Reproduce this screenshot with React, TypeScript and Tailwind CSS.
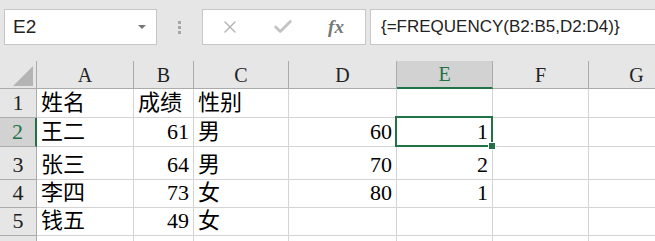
import { X, Check } from 'lucide-react';

const cols = [
  { key: 'A', w: 'w-[97px]' },
  { key: 'B', w: 'w-[60px]' },
  { key: 'C', w: 'w-[95px]' },
  { key: 'D', w: 'w-[108px]' },
  { key: 'E', w: 'w-[96px]' },
  { key: 'F', w: 'w-[96px]' },
  { key: 'G', w: 'w-[96px]' },
];

type Cell = { v: string; num?: boolean };

const rows: { n: number; h: string; cells: (Cell | null)[] }[] = [
  { n: 1, h: 'h-[29px]', cells: [{ v: '姓名' }, { v: '成绩' }, { v: '性别' }, null, null, null, null] },
  { n: 2, h: 'h-[29px]', cells: [{ v: '王二' }, { v: '61', num: true }, { v: '男' }, { v: '60', num: true }, { v: '1', num: true }, null, null] },
  { n: 3, h: 'h-[33px]', cells: [{ v: '张三' }, { v: '64', num: true }, { v: '男' }, { v: '70', num: true }, { v: '2', num: true }, null, null] },
  { n: 4, h: 'h-[28px]', cells: [{ v: '李四' }, { v: '73', num: true }, { v: '女' }, { v: '80', num: true }, { v: '1', num: true }, null, null] },
  { n: 5, h: 'h-[28px]', cells: [{ v: '钱五' }, { v: '49', num: true }, { v: '女' }, null, null, null, null] },
  // row 6 only peeks in at the bottom edge, its number stays out of view
  { n: 6, h: 'h-[28px]', cells: [null, null, null, null, null, null, null] },
];

const cellFont = { fontFamily: '"Liberation Serif", "Noto Sans CJK SC", serif' };

function Toolbar() {
  return (
    <div className="h-[61px] bg-[#e6e6e6] flex items-start pt-[9px] pl-[4px]">
      <div className="w-[153px] h-[36px] bg-white border border-[#c6c6c6] flex items-center justify-between pl-[8px] pr-[10px]">
        <span className="text-[19px] text-[#222]" style={{ fontFamily: '"Liberation Sans", sans-serif' }}>E2</span>
        <span className="w-0 h-0 border-l-[4px] border-r-[4px] border-t-[4px] border-l-transparent border-r-transparent border-t-[#777]" />
      </div>
      <div className="w-[45px] h-[36px] flex flex-col items-center justify-center gap-[2px]">
        <span className="w-[3px] h-[3px] bg-[#a6a6a6]" />
        <span className="w-[3px] h-[3px] bg-[#a6a6a6]" />
        <span className="w-[3px] h-[3px] bg-[#a6a6a6]" />
      </div>
      <div className="w-[164px] h-[36px] bg-white border border-[#c6c6c6] flex items-center">
        <div className="w-[54px] flex justify-center">
          <X size={20} strokeWidth={1.6} color="#b3b3b3" />
        </div>
        <div className="w-[52px] flex justify-center">
          <Check size={22} strokeWidth={3} color="#c3c3c3" />
        </div>
        <div className="flex-1 flex justify-center pr-[2px]">
          <span className="text-[19px] italic font-bold text-[#777]" style={{ fontFamily: '"Liberation Serif", serif' }}>fx</span>
        </div>
      </div>
      <div className="ml-[4px] flex-1 h-[36px] bg-white border border-[#c6c6c6] border-r-0 flex items-center pl-[10px]">
        <span className="text-[17px] text-[#222] whitespace-nowrap" style={{ fontFamily: '"Liberation Sans", sans-serif' }}>
          {'{=FREQUENCY(B2:B5,D2:D4)}'}
        </span>
      </div>
    </div>
  );
}

function HeaderRow() {
  return (
    <div className="flex h-[28px] bg-[#e6e6e6]">
      <div className="w-[37px] shrink-0 border-r border-b border-[#ababab] flex items-end justify-end pr-[3px] pb-[2px]">
        <div className="w-[20px] h-[20px] bg-[#b4b4b4] [clip-path:polygon(100%_0,100%_100%,0_100%)]" />
      </div>
      {cols.map((c) => {
        const sel = c.key === 'E';
        return (
          <div
            key={c.key}
            className={`${c.w} shrink-0 border-r border-[#ababab] flex items-center justify-center text-[20px] ${sel ? 'bg-[#d2d2d2] border-b-2 border-b-[#217346] text-[#217346]' : 'border-b border-b-[#ababab] text-[#222]'}`}
            style={cellFont}
          >
            {c.key}
          </div>
        );
      })}
    </div>
  );
}

export default function App() {
  return (
    <div className="w-[655px] h-[241px] overflow-hidden bg-white">
      <Toolbar />
      <HeaderRow />
      {rows.map((r) => (
        <div key={r.n} className={`flex ${r.h}`}>
          <div
            className={`w-[37px] shrink-0 border-b border-[#ababab] flex items-end justify-center pb-[1px] text-[22px] leading-[26px] ${r.n === 2 ? 'bg-[#d2d2d2] border-r-2 border-r-[#217346] text-[#217346]' : 'bg-[#e6e6e6] border-r border-r-[#ababab] text-[#222]'}`}
            style={cellFont}
          >
            {r.n < 6 ? r.n : null}
          </div>
          {cols.map((c, i) => {
            const cell = r.cells[i];
            const sel = r.n === 2 && c.key === 'E';
            return (
              <div
                key={c.key}
                className={`${c.w} shrink-0 border-r border-b border-[#d4d4d4] relative flex items-end pb-[1px] text-[22px] leading-[26px] text-black ${cell?.num ? 'justify-end pr-[4px]' : 'pl-[4px]'}`}
                style={cellFont}
              >
                {cell?.v}
                {sel && (
                  <>
                    <span className="absolute z-10 -left-[2px] -top-[2px] -right-[1px] -bottom-[1px] border-2 border-[#217346]" />
                    <span className="absolute z-10 -right-[4px] -bottom-[4px] w-[8px] h-[8px] bg-[#217346] border border-white" />
                  </>
                )}
              </div>
            );
          })}
        </div>
      ))}
    </div>
  );
}
